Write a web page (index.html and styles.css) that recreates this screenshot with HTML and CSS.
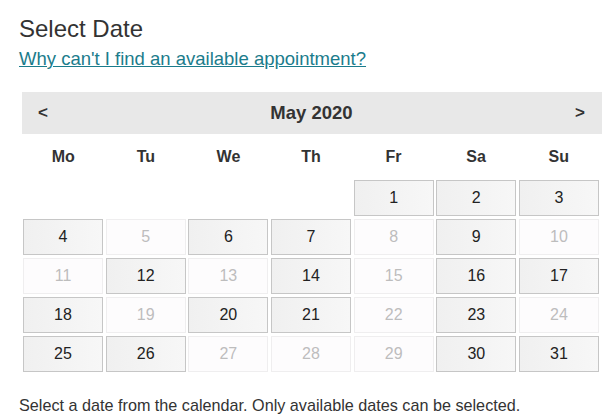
FILE: index.html
```html
<!DOCTYPE html>
<html lang="en">
<head>
  <meta charset="UTF-8">
  <meta name="viewport" content="width=device-width, initial-scale=1.0">
  <title>Select Date</title>
  <link rel="stylesheet" href="styles.css">
</head>
<body>
  <div class="page">
    <h1>Select Date</h1>
    <a class="help-link" href="#">Why can't I find an available appointment?</a>

    <div class="calendar">
      <div class="cal-header">
        <span class="nav">&lt;</span>
        <span class="month">May 2020</span>
        <span class="nav">&gt;</span>
      </div>

      <div class="weekdays">
        <div>Mo</div><div>Tu</div><div>We</div><div>Th</div><div>Fr</div><div>Sa</div><div>Su</div>
      </div>

      <div class="days">
        <div class="day empty"></div>
        <div class="day empty"></div>
        <div class="day empty"></div>
        <div class="day empty"></div>
        <div class="day open">1</div>
        <div class="day open">2</div>
        <div class="day open">3</div>

        <div class="day open">4</div>
        <div class="day off">5</div>
        <div class="day open">6</div>
        <div class="day open">7</div>
        <div class="day off">8</div>
        <div class="day open">9</div>
        <div class="day off">10</div>

        <div class="day off">11</div>
        <div class="day open">12</div>
        <div class="day off">13</div>
        <div class="day open">14</div>
        <div class="day off">15</div>
        <div class="day open">16</div>
        <div class="day open">17</div>

        <div class="day open">18</div>
        <div class="day off">19</div>
        <div class="day open">20</div>
        <div class="day open">21</div>
        <div class="day off">22</div>
        <div class="day open">23</div>
        <div class="day off">24</div>

        <div class="day open">25</div>
        <div class="day open">26</div>
        <div class="day off">27</div>
        <div class="day off">28</div>
        <div class="day off">29</div>
        <div class="day open">30</div>
        <div class="day open">31</div>
      </div>
    </div>

    <p class="note">Select a date from the calendar. Only available dates can be selected.</p>
  </div>
</body>
</html>
```

FILE: styles.css
```css
body {
    font-family: "Liberation Sans", Arial, sans-serif;
    background-color: #ffffff;
    color: #333333;
    margin: 0;
    padding: 0;
}

.page {
    padding: 15px 8px 0 19px;
}

h1 {
    font-size: 24px;
    font-weight: normal;
    margin: 0;
    line-height: 28px;
}

.help-link {
    display: inline-block;
    margin-top: 4px;
    font-size: 18.5px;
    line-height: 24px;
    color: #1b7c8c;
    text-decoration: underline;
}

.calendar {
    width: 580px;
    margin: 21px 0 0 3px;
}

.cal-header {
    display: flex;
    justify-content: space-between;
    align-items: center;
    height: 42px;
    padding: 0 17px 0 16px;
    background-color: #e8e8e8;
    font-weight: bold;
    font-size: 18.5px;
    color: #333;
}

.cal-header .nav {
    font-size: 17px;
}

.weekdays {
    display: grid;
    grid-template-columns: repeat(7, 1fr);
    width: 578px;
    height: 46px;
    align-items: center;
    font-weight: bold;
    font-size: 16px;
    text-align: center;
    color: #333;
}

.days {
    display: grid;
    grid-template-columns: repeat(7, 1fr);
    grid-auto-rows: 36px;
    gap: 3px 2.67px;
    width: 576px;
    padding-left: 1px;
}

.day {
    display: flex;
    align-items: center;
    justify-content: center;
    font-size: 16px;
    box-sizing: border-box;
}

.day.open {
    background: linear-gradient(to right, #f0f0f0, #f7f7f7);
    border: 1px solid #c6c6c6;
    color: #222;
}

.day.off {
    background-color: #fdfcfd;
    border: 1px solid #efeeef;
    color: #bdbdbd;
}

.note {
    margin: 24px 0 0;
    font-size: 16.2px;
    color: #333;
}
```
